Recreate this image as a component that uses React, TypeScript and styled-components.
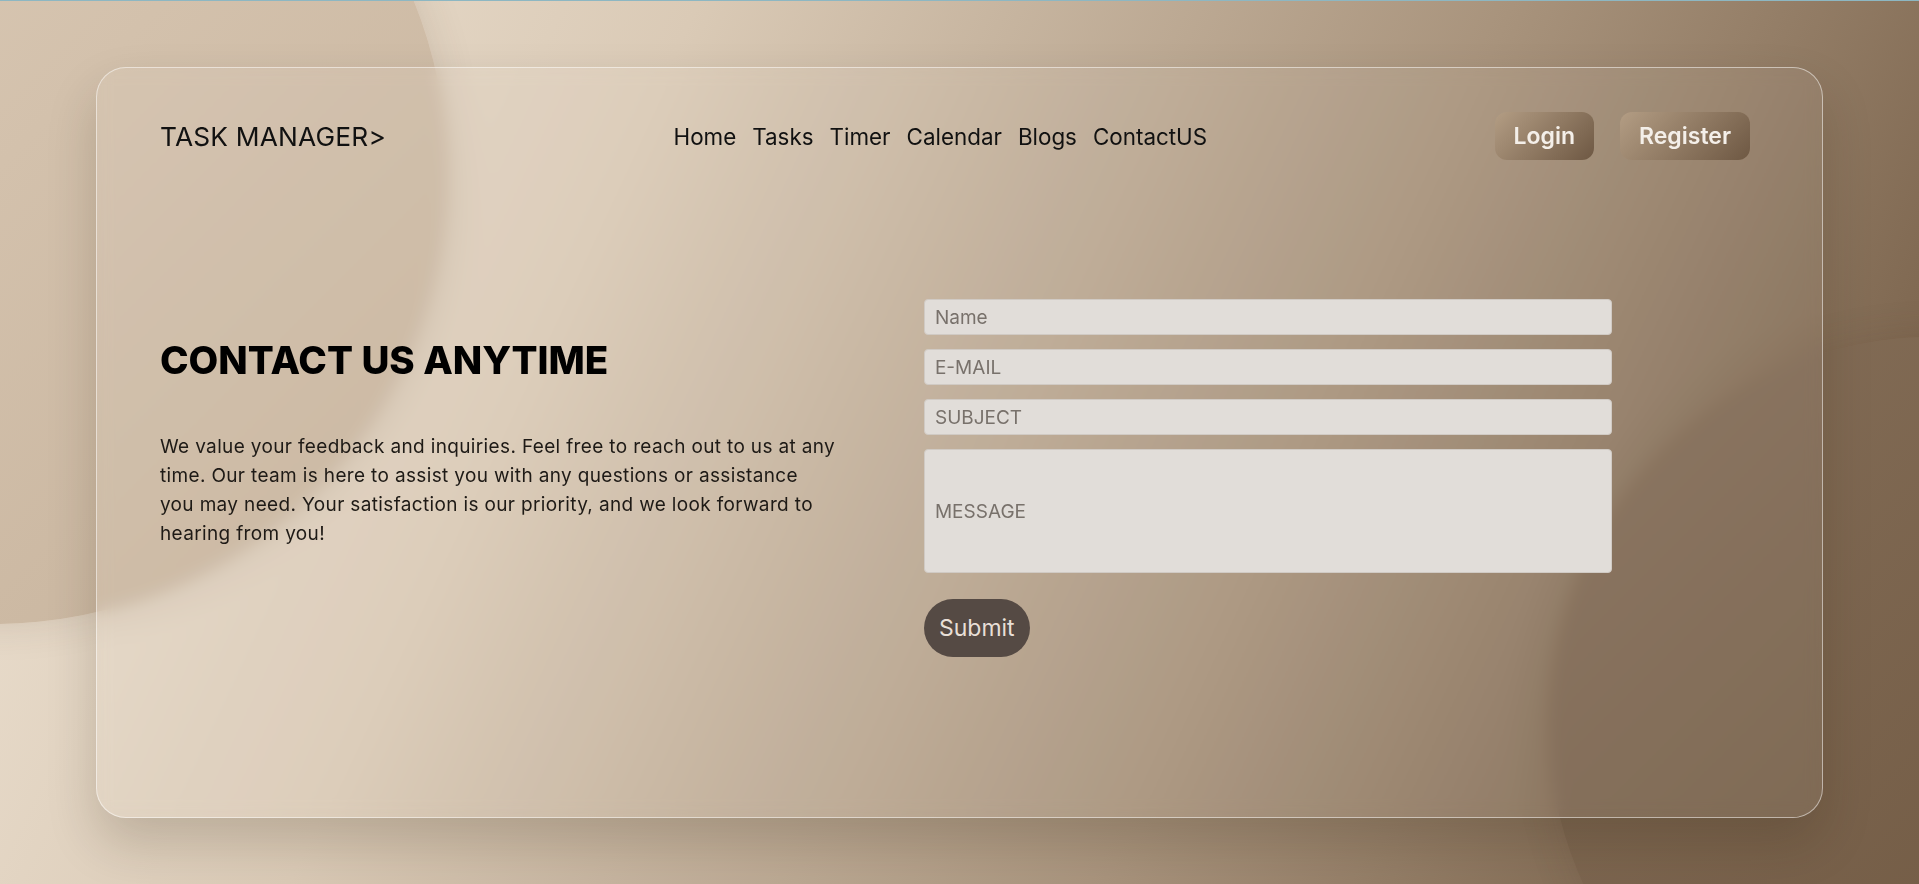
import styled, { createGlobalStyle } from "styled-components";

const GlobalStyle = createGlobalStyle`
  * {
    box-sizing: border-box;
  }
  html, body {
    margin: 0;
    padding: 0;
  }
  body {
    font-family: Inter, "Open Sans", sans-serif;
    color: #111;
  }
`;

const links = ["Home", "Tasks", "Timer", "Calendar", "Blogs", "ContactUS"];

const App = () => {
  return (
    <>
      <GlobalStyle />
      <Page>
        <Blob $left={-459} $top={-283} $size={906} $from="#e0d0bd" $to="#c6b29b" />
        <Blob $left={1548} $top={336} $size={772} $from="#86705a" $to="#6a523b" />
        <Card>
          <Nav>
            <Logo>TASK MANAGER&gt;</Logo>
            <Links>
              {links.map((l) => (
                <li key={l}>{l}</li>
              ))}
            </Links>
            <Auth>
              <AuthButton>Login</AuthButton>
              <AuthButton>Register</AuthButton>
            </Auth>
          </Nav>
          <Main>
            <Intro>
              <Heading>CONTACT US ANYTIME</Heading>
              <Text>
                We value your feedback and inquiries. Feel free to reach out to us at any
                <br />
                time. Our team is here to assist you with any questions or assistance
                <br />
                you may need. Your satisfaction is our priority, and we look forward to
                <br />
                hearing from you!
              </Text>
            </Intro>
            <Form onSubmit={(e) => e.preventDefault()}>
              <Field placeholder="Name" />
              <Field placeholder="E-MAIL" />
              <Field placeholder="SUBJECT" />
              <Field placeholder="MESSAGE" $tall />
              <Submit type="submit">Submit</Submit>
            </Form>
          </Main>
        </Card>
      </Page>
    </>
  );
};
export default App;

const Page = styled.div`
position: relative;
overflow: hidden;
height: 100vh;
border-top: 1px solid #8db7c2;
display: flex;
align-items: center;
justify-content: center;
background: linear-gradient(115deg, #efe4d5 0%, #dacab6 30%, #a8937c 65%, #6c543d 100%);
`

const Blob = styled.div<{ $left: number; $top: number; $size: number; $from: string; $to: string }>`
position: absolute;
left: ${(p) => p.$left}px;
top: ${(p) => p.$top}px;
width: ${(p) => p.$size}px;
height: ${(p) => p.$size}px;
border-radius: 50%;
background: linear-gradient(135deg, ${(p) => p.$from}, ${(p) => p.$to});
box-shadow: 0 0 40px rgba(80, 60, 40, 0.14);
`

const Card = styled.div`
position: relative;
z-index: 1;
width: 90%;
height: 85%;
border-radius: 30px;
border: 1px solid rgba(255, 255, 255, 0.5);
background: rgba(255, 255, 255, 0.06);
backdrop-filter: blur(8px);
box-shadow: 0 25px 50px rgba(40, 25, 10, 0.18);
padding: 44px 72px 0 63px;
display: flex;
flex-direction: column;
`

const Nav = styled.nav`
height: 48px;
display: flex;
align-items: center;
justify-content: space-between;
`

const Logo = styled.div`
font-size: 26.3px;
font-weight: 400;
color: #111;
letter-spacing: 0.2px;
`

const Links = styled.ul`
margin: 0;
padding: 0;
list-style: none;
display: flex;
gap: 16px;
font-size: 22.4px;
color: #111;
`

const Auth = styled.div`
display: flex;
gap: 26px;
`

const AuthButton = styled.button`
height: 48px;
padding: 0 19px;
border: none;
border-radius: 12px;
background: linear-gradient(135deg, #b39d84, #6e5843);
color: #f4efe9;
font-family: inherit;
font-size: 23px;
font-weight: 600;
cursor: pointer;
`

const Main = styled.main`
display: flex;
gap: 64px;
margin-top: 139px;
`

const Intro = styled.div`
width: 700px;
padding-top: 42px;
`

const Heading = styled.h1`
margin: 0;
font-size: 38.5px;
line-height: 1;
font-weight: 800;
color: #000;
`

const Text = styled.p`
margin: 52px 0 0;
font-size: 19px;
letter-spacing: 0.35px;
line-height: 29px;
color: #1e1a16;
white-space: nowrap;
`

const Form = styled.form`
width: 688px;
display: flex;
flex-direction: column;
gap: 14px;
`

const Field = styled.input<{ $tall?: boolean }>`
height: ${(p) => (p.$tall ? 124 : 36)}px;
padding: 0 10px;
border: 1px solid #d0cac4;
border-radius: 4px;
background: #e1ddd9;
font-family: inherit;
font-size: 19px;
color: #333;
outline: none;
&::placeholder {
  color: #78716b;
}
`

const Submit = styled.button`
align-self: flex-start;
margin-top: 12px;
height: 58px;
padding: 0 15px;
border: none;
border-radius: 29px;
background: #554a44;
color: #e8dfd7;
font-family: inherit;
font-size: 23px;
cursor: pointer;
`
